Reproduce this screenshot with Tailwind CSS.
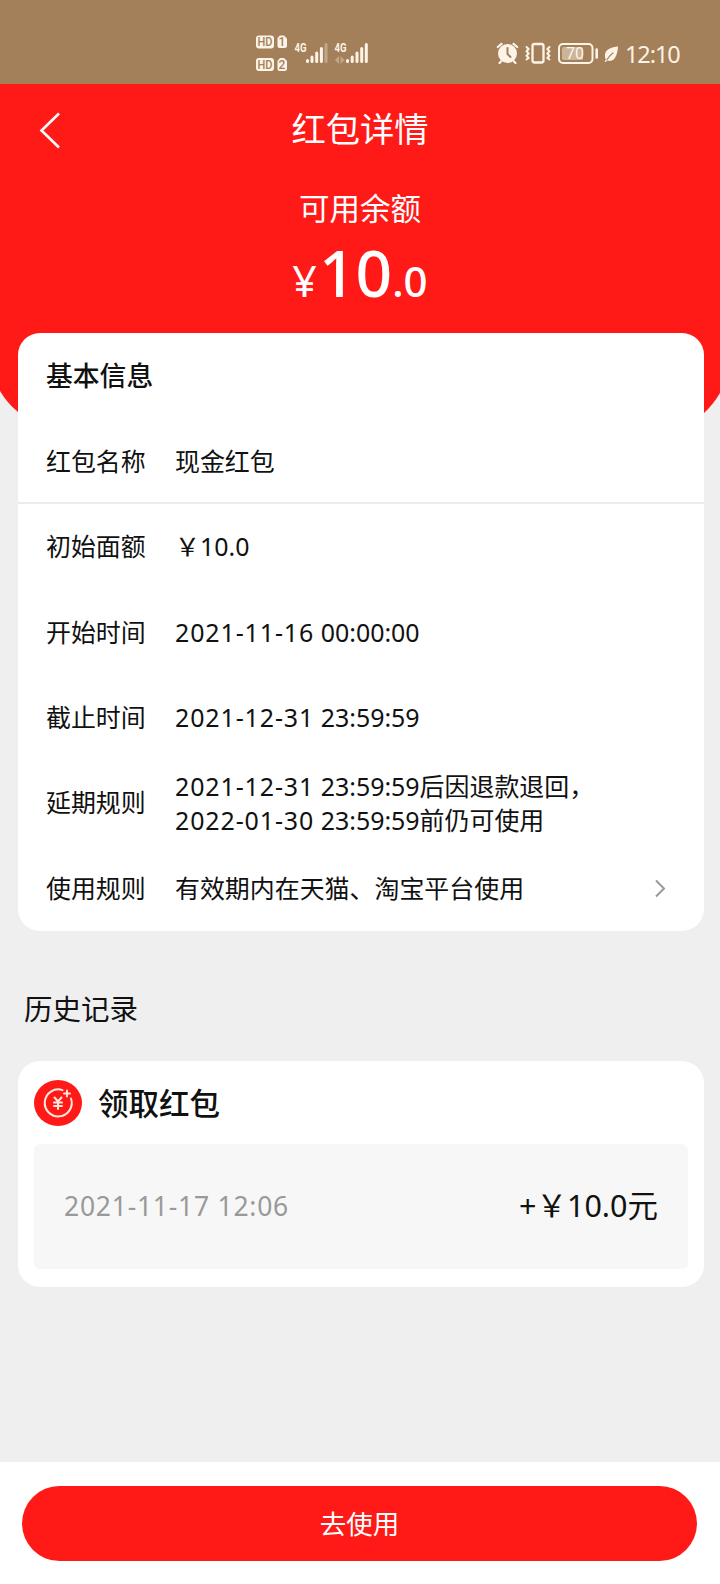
<!DOCTYPE html>
<html lang="zh-CN">
<head>
  <meta charset="UTF-8">
  <title>红包详情</title>
  <script src="https://cdn.jsdelivr.net/npm/@tailwindcss/browser@4"></script>
</head>
<body class="bg-[#efefef]">
  <div class="relative isolate w-[720px] h-[1584px] flex flex-col overflow-hidden text-[#111] font-['Noto_Sans','Noto_Sans_CJK_SC',sans-serif]">

    <!-- status bar -->
    <div class="h-[84px] shrink-0 bg-[#a38059] flex items-start pl-[254px] pt-8 text-[#fdf3e6]">
      <svg class="w-[120px] h-[44px] shrink-0" viewBox="254 32 120 44" fill="#fdf3e6" font-family="Roboto, sans-serif" font-weight="700">
        <rect x="256" y="35.5" width="18" height="13" rx="3"/>
        <path d="M280 35.5h4l3 3v7a2.5 2.5 0 0 1-2.5 2.5h-5a2 2 0 0 1-2-2v-8z"/>
        <rect x="256" y="58" width="18" height="13" rx="3"/>
        <path d="M280 58h4l3 3v7.5a2.5 2.5 0 0 1-2.5 2.5h-5a2 2 0 0 1-2-2v-8z"/>
        <g fill="#a38059" font-size="12" font-weight="500">
          <text x="257.5" y="46.3" textLength="15" lengthAdjust="spacingAndGlyphs">HD</text>
          <text x="282" y="46.3" text-anchor="middle">1</text>
          <text x="257.5" y="68.8" textLength="15" lengthAdjust="spacingAndGlyphs">HD</text>
          <text x="282" y="68.8" text-anchor="middle">2</text>
        </g>
        <g font-size="13" font-weight="700">
          <text x="294.5" y="52" textLength="12" lengthAdjust="spacingAndGlyphs">4G</text>
          <text x="334.5" y="52" textLength="12" lengthAdjust="spacingAndGlyphs">4G</text>
        </g>
        <g stroke="#fdf3e6" stroke-width="3" stroke-linecap="round">
          <path d="M307.5 60.5v1M312 57v4.5M316.7 53v8.5M321.4 48.5v13"/>
          <path d="M326 44.5v17" opacity=".35"/>
          <path d="M347.5 60.5v1M352.2 57v4.5M357 53v8.5M361.7 48.5v13M366.3 44.5v17"/>
        </g>
        <path d="M335 60l4-4v8zM344.5 60l-4-4v8z" opacity=".35"/>
      </svg>
      <svg class="w-[124px] h-[28px] mt-1.5 ml-[121px] shrink-0" viewBox="495 38 124 28" fill="none" stroke="#fdf3e6" stroke-linecap="round" stroke-linejoin="round">
        <!-- alarm -->
        <circle cx="507.5" cy="53.5" r="9.5" fill="#fdf3e6" stroke="none"/>
        <path d="M507.5 48v6l3 3" stroke="#a38059" stroke-width="2"/>
        <path d="M497.8 47l3.7-3.2M517.2 47l-3.7-3.2M501 61.5l-1.5 1.5M514 61.5l1.5 1.5" stroke-width="2.2"/>
        <!-- vibrate -->
        <rect x="532.5" y="44" width="11" height="18.5" rx="2" stroke-width="2.3"/>
        <path d="M526.5 47l2.2 2-2.2 2.3 2.2 2.2-2.2 2.3 2.2 2.2-2.2 1.5M549.5 47l-2.2 2 2.2 2.3-2.2 2.2 2.2 2.3-2.2 2.2 2.2 1.5" stroke-width="2"/>
        <!-- battery -->
        <rect x="559" y="44" width="33.5" height="19" rx="4" stroke-width="2"/>
        <rect x="562" y="47" width="21" height="13" rx="1.5" fill="#cbb598" stroke="none"/>
        <path d="M596.7 49.5v8" stroke-width="2.6"/>
        <text x="575" y="59.3" font-size="16" font-family="Roboto, sans-serif" fill="#fdf3e6" stroke="none" text-anchor="middle">70</text>
        <!-- leaf -->
        <path d="M618 46.5c-6 .5-14 2.5-13 10.5 0 1 .5 2 1 2.5l-1.5 2 1 .5 1.8-1.500c7.5 2.500 10.2-6 10.7-14z" fill="#fdf3e6" stroke="none"/>
        <path d="M607 59.5q2.5-4 6-6.5" stroke="#a38059" stroke-width="1.2"/>
      </svg>
      <div class="mt-[5px] ml-1.5 text-[23.5px] leading-[35px] tracking-[-1.1px] whitespace-nowrap">12:10</div>
    </div>

    <!-- red header -->
    <div class="h-[249px] shrink-0 text-white flex flex-col items-center">
      <svg class="absolute left-0 top-[84px] -z-10 w-[720px] h-[332px]" viewBox="0 84 720 332" fill="#ff1a18">
        <path d="M0 84H720V393Q713 405 703 414L700 416H21L18 412Q7 403 0 391Z"/>
      </svg>
      <div class="w-full h-[93px] grid grid-cols-3 items-center">
        <svg class="ml-[38px] w-6 h-10" viewBox="0 0 24 40" fill="none" stroke="#fff" stroke-width="2.6">
          <path d="M21 2.5L3.500 19.5L21 36.5"/>
        </svg>
        <div class="pb-[3px] text-center text-[34.3px]">红包详情</div>
      </div>
      <div class="text-[30.5px] leading-[62px]">可用余额</div>
      <div class="flex items-baseline h-[70px] leading-[68px] font-medium">
        <span class="text-[43px] font-normal mr-[2px]">¥</span>
        <span class="text-[64px]">10</span>
        <span class="text-[42px]">.0</span>
      </div>
    </div>

    <!-- basic info -->
    <div class="mx-[18px] w-[686px] h-[598px] shrink-0 bg-white rounded-[22px] flex flex-col text-[24.95px]">
      <div class="h-[85px] pl-7 pt-0.5 flex items-center text-[26.8px] font-medium">基本信息</div>
      <div class="h-[86px] pl-7 pt-[3px] flex items-center border-b-2 border-[#ececec]">
        <div class="w-[129px]">红包名称</div>
        <div>现金红包</div>
      </div>
      <div class="h-[86px] pl-7 flex items-center">
        <div class="w-[129px]">初始面额</div>
        <div>￥10.0</div>
      </div>
      <div class="h-[86px] pl-7 flex items-center">
        <div class="w-[129px]">开始时间</div>
        <div><span class="tracking-[0.9px]">2021-11-16</span> 00:00:00</div>
      </div>
      <div class="h-[84px] pl-7 flex items-center">
        <div class="w-[129px]">截止时间</div>
        <div><span class="tracking-[0.9px]">2021-12-31</span> 23:59:59</div>
      </div>
      <div class="h-[86px] pl-7 flex items-center">
        <div class="w-[129px]">延期规则</div>
        <div class="pb-px leading-[34px] whitespace-nowrap"><span class="tracking-[0.9px]">2021-12-31</span> 23:59:59后因退款退回，<br><span class="tracking-[0.9px]">2022-01-30</span> 23:59:59前仍可使用</div>
      </div>
      <div class="h-[85px] pl-7 pr-[38px] flex items-center">
        <div class="w-[129px]">使用规则</div>
        <div>有效期内在天猫、淘宝平台使用</div>
        <svg class="ml-auto w-3 h-5" viewBox="0 0 12 20" fill="none" stroke="#999" stroke-width="2">
          <path d="M2 1.5L10 9.5L2 17.5"/>
        </svg>
      </div>
    </div>

    <!-- history -->
    <div class="h-[130px] shrink-0 pl-6 pt-[57px] text-[28.5px] leading-[42px]">历史记录</div>
    <div class="mx-[18px] w-[686px] h-[226px] shrink-0 bg-white rounded-[22px] px-4">
      <div class="h-[83px] pt-px flex items-center gap-4 text-[30.5px] font-medium">
        <svg class="w-12 h-[46px]" viewBox="0 0 48 46" fill="none" stroke="#ffe9dc" stroke-linecap="round">
          <ellipse cx="24" cy="23" rx="24" ry="23" fill="#ff1a18" stroke="none"/>
          <path d="M28.5 10.1A13.5 13.5 0 1 0 37 18.5" stroke-width="2"/>
          <path d="M30 13.5h6M33 10.5v6" stroke-width="1.8"/>
          <path d="M20.5 17.5l3.500 4 3.5-4M24 21.500v7.500M20 22.5h8M20 26h8" stroke-width="2"/>
        </svg>
        <div class="pt-0.5">领取红包</div>
      </div>
      <div class="h-[125px] bg-[#f7f7f7] rounded-md px-[30px] flex items-center justify-between">
        <div class="text-[26.5px] text-[#999] tracking-[0.75px]">2021-11-17 12:06</div>
        <div class="pb-[2px] text-[30.5px]">+￥10.0元</div>
      </div>
    </div>

    <!-- bottom button -->
    <div class="mt-auto h-[122px] shrink-0 bg-white pt-6 pl-[22px]">
      <div class="w-[675px] h-[75px] pt-0.5 rounded-full bg-[#ff1a18] text-white text-[26.5px] flex items-center justify-center">去使用</div>
    </div>
  </div>
</body>
</html>
